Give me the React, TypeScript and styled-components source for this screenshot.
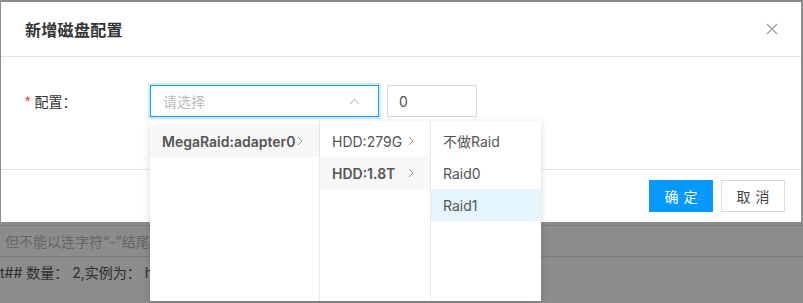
import styled, { createGlobalStyle } from 'styled-components';

const Global = createGlobalStyle`
  html, body {
    margin: 0;
    padding: 0;
    width: 803px;
    height: 303px;
    overflow: hidden;
    background: #fff;
    font-family: Inter, "Noto Sans CJK SC", "Noto Sans", sans-serif;
    color: #333;
  }
`;

const Page = styled.div`
  position: relative;
  width: 803px;
  height: 303px;
  overflow: hidden;
`;

const PageTop = styled.div`
  height: 225px;
  border-bottom: 1px solid #e2e2e2;
`;

const PageRow = styled.div<{ $muted?: boolean }>`
  height: 30px;
  display: flex;
  align-items: center;
  padding-left: ${(p) => (p.$muted ? '5px' : '0')};
  border-bottom: ${(p) => (p.$muted ? '1px solid #e2e2e2' : 'none')};
  font-size: 14px;
  color: ${(p) => (p.$muted ? '#bbb' : '#555')};
  white-space: nowrap;
`;

const Mask = styled.div`
  position: absolute;
  inset: 0;
  background: rgba(0, 0, 0, 0.45);
`;

const Modal = styled.div`
  position: absolute;
  top: 2px;
  left: 1px;
  width: 800px;
  height: 220px;
  background: #fff;
  display: flex;
  flex-direction: column;
`;

const Header = styled.div`
  height: 54px;
  border-bottom: 1px solid #e5e5e5;
  display: flex;
  align-items: center;
  justify-content: space-between;
  padding: 0 23px 0 24px;
`;

const Title = styled.div`
  font-size: 16px;
  font-weight: 600;
  color: #333;
  letter-spacing: 0.3px;
`;

const Close = styled.button`
  border: 0;
  background: none;
  padding: 0;
  width: 12px;
  height: 12px;
  display: flex;
  cursor: pointer;
`;

const Body = styled.div`
  padding: 28px 24px 52px;
`;

const FormRow = styled.div`
  display: flex;
  align-items: center;
  height: 32px;
`;

const Label = styled.label`
  width: 125px;
  font-size: 14px;
  color: #333;
  display: flex;
  align-items: center;
`;

const Star = styled.span`
  color: #f5222d;
  margin-right: 4px;
  font-family: "Liberation Sans", sans-serif;
`;

const SelectWrap = styled.div`
  position: relative;
`;

const Select = styled.div`
  width: 229px;
  height: 32px;
  box-sizing: border-box;
  border: 1px solid #1a9bff;
  box-shadow: 0 0 0 2px rgba(26, 155, 255, 0.2);
  display: flex;
  align-items: center;
  justify-content: space-between;
  padding: 0 18px 0 12px;
  font-size: 14px;
  color: #bbb;
`;

const NumInput = styled.div`
  margin-left: 8px;
  width: 90px;
  height: 32px;
  box-sizing: border-box;
  border: 1px solid #d9d9d9;
  display: flex;
  align-items: center;
  padding-left: 11px;
  font-size: 14px;
  color: #555;
`;

const Menu = styled.div`
  position: absolute;
  top: 36px;
  left: 0;
  width: max-content;
  height: 180px;
  display: flex;
  background: #fff;
  box-shadow: 0 2px 8px rgba(0, 0, 0, 0.15);
  z-index: 2;
`;

const Column = styled.ul<{ $w: number; $last?: boolean }>`
  list-style: none;
  margin: 0;
  padding: 4px 0 0;
  flex: none;
  width: ${(p) => p.$w}px;
  box-sizing: border-box;
  border-right: ${(p) => (p.$last ? 'none' : '1px solid #e8e8e8')};
`;

const Item = styled.li<{ $state?: 'path' | 'selected'; $bold?: boolean }>`
  height: 32px;
  display: flex;
  align-items: center;
  justify-content: space-between;
  padding: 0 16px 0 12px;
  font-size: 14px;
  color: #555;
  white-space: nowrap;
  font-weight: ${(p) => (p.$bold ? 600 : 400)};
  background: ${(p) =>
    p.$state === 'path' ? '#f7f7f7' : p.$state === 'selected' ? '#e4f5fd' : 'transparent'};
`;

const Footer = styled.div`
  border-top: 1px solid #e5e5e5;
  padding: 10px 16px;
  display: flex;
  justify-content: flex-end;
  gap: 8px;
`;

const Button = styled.button<{ $primary?: boolean }>`
  width: 64px;
  height: 32px;
  box-sizing: border-box;
  border: 1px solid ${(p) => (p.$primary ? '#0799ff' : '#d9d9d9')};
  background: ${(p) => (p.$primary ? '#0799ff' : '#fff')};
  color: ${(p) => (p.$primary ? '#fff' : '#444')};
  font-family: inherit;
  font-size: 14px;
  letter-spacing: 5px;
  text-indent: 5px;
  padding: 0;
  cursor: pointer;
`;

const Chevron = ({ dir }: { dir: 'up' | 'right' }) =>
  dir === 'up' ? (
    <svg width="11" height="7" viewBox="0 0 11 7">
      <path d="M1 6 L5.5 1.2 L10 6" fill="none" stroke="#aaa" strokeWidth="1" />
    </svg>
  ) : (
    <svg width="6" height="10" viewBox="0 0 6 10">
      <path d="M1 1 L5 5 L1 9" fill="none" stroke="#999" strokeWidth="1" />
    </svg>
  );

export default function App() {
  return (
    <Page>
      <Global />
      <PageTop />
      <PageRow $muted>但不能以连字符“-”结尾</PageRow>
      <PageRow>t## 数量： 2,实例为： hostname</PageRow>
      <Mask />
      <Modal>
        <Header>
          <Title>新增磁盘配置</Title>
          <Close aria-label="close">
            <svg width="12" height="12" viewBox="0 0 12 12">
              <path d="M1 1 L11 11 M11 1 L1 11" stroke="#999" strokeWidth="1.1" />
            </svg>
          </Close>
        </Header>
        <Body>
          <FormRow>
            <Label>
              <Star>*</Star>配置：
            </Label>
            <SelectWrap>
              <Select>
                <span>请选择</span>
                <Chevron dir="up" />
              </Select>
              <Menu>
                <Column $w={170}>
                  <Item $state="path" $bold>
                    <span>MegaRaid:adapter0</span>
                    <Chevron dir="right" />
                  </Item>
                </Column>
                <Column $w={111}>
                  <Item>
                    <span>HDD:279G</span>
                    <Chevron dir="right" />
                  </Item>
                  <Item $state="path" $bold>
                    <span>HDD:1.8T</span>
                    <Chevron dir="right" />
                  </Item>
                </Column>
                <Column $w={110} $last>
                  <Item>不做Raid</Item>
                  <Item>Raid0</Item>
                  <Item $state="selected">Raid1</Item>
                </Column>
              </Menu>
            </SelectWrap>
            <NumInput>0</NumInput>
          </FormRow>
        </Body>
        <Footer>
          <Button $primary>确定</Button>
          <Button>取消</Button>
        </Footer>
      </Modal>
    </Page>
  );
}
